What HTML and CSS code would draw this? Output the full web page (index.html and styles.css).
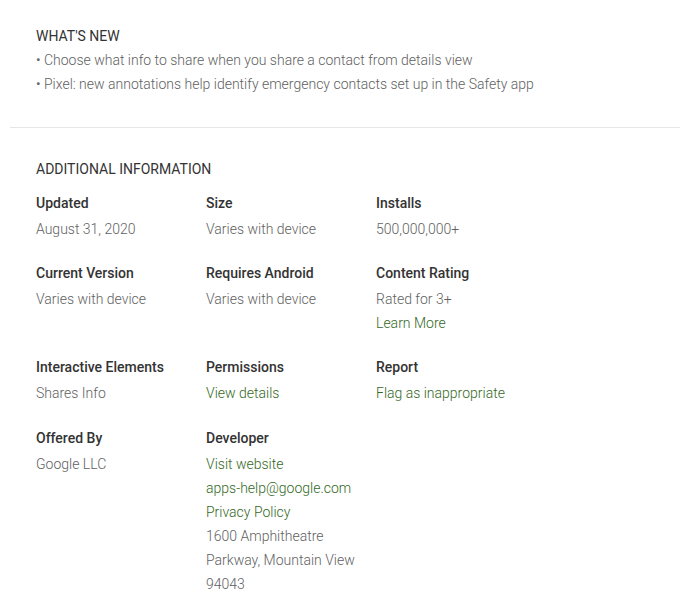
FILE: index.html
```html
<!DOCTYPE html>
<html lang="en">
<head>
  <meta charset="UTF-8" />
  <title>Additional information</title>
  <link rel="stylesheet" href="styles.css">
</head>
<body>
  <div class="page">
    <div class="section whats-new">
      <h2>What's New</h2>
      <div class="notes">
        • Choose what info to share when you share a contact from details view<br>
        • Pixel: new annotations help identify emergency contacts set up in the Safety app
      </div>
    </div>

    <div class="section info">
      <h2>Additional Information</h2>
      <div class="grid">
        <div class="item">
          <div class="label">Updated</div>
          <div class="value">August 31, 2020</div>
        </div>
        <div class="item">
          <div class="label">Size</div>
          <div class="value">Varies with device</div>
        </div>
        <div class="item">
          <div class="label">Installs</div>
          <div class="value">500,000,000+</div>
        </div>

        <div class="item">
          <div class="label">Current Version</div>
          <div class="value">Varies with device</div>
        </div>
        <div class="item">
          <div class="label">Requires Android</div>
          <div class="value">Varies with device</div>
        </div>
        <div class="item">
          <div class="label">Content Rating</div>
          <div class="value">Rated for 3+</div>
          <div class="value"><a href="#">Learn More</a></div>
        </div>

        <div class="item">
          <div class="label">Interactive Elements</div>
          <div class="value">Shares Info</div>
        </div>
        <div class="item">
          <div class="label">Permissions</div>
          <div class="value"><a href="#">View details</a></div>
        </div>
        <div class="item">
          <div class="label">Report</div>
          <div class="value"><a href="#">Flag as inappropriate</a></div>
        </div>

        <div class="item">
          <div class="label">Offered By</div>
          <div class="value">Google LLC</div>
        </div>
        <div class="item">
          <div class="label">Developer</div>
          <div class="value"><a href="#">Visit website</a></div>
          <div class="value"><a href="#">apps-help@google.com</a></div>
          <div class="value"><a href="#">Privacy Policy</a></div>
          <div class="value">1600 Amphitheatre Parkway, Mountain View 94043</div>
        </div>
      </div>
    </div>
  </div>
</body>
</html>
```

FILE: styles.css
```css
body {
  margin: 0;
  background: #fff;
  font-family: Roboto, Arial, sans-serif;
  font-size: 14px;
  line-height: 24px;
  color: #333;
}

.page {
  margin: 0 10px;
}

.section {
  padding: 24px 26px 30px;
}

.whats-new {
  padding-bottom: 31px;
  border-bottom: 1px solid #e6e6e6;
}

h2 {
  margin: 0;
  font-size: 14px;
  font-weight: 400;
  text-transform: uppercase;
  color: #333;
}

.notes {
  font-weight: 300;
  color: #616161;
}

.info {
  padding-top: 29px;
}

.info h2 {
  margin-bottom: 10px;
}

.grid {
  display: grid;
  grid-template-columns: repeat(3, 170px);
  row-gap: 20px;
}

.item {
  padding-right: 12px;
}

.item:nth-child(n+10) {
  margin-top: 1px;
}

.label {
  font-weight: 500;
  color: #333;
  margin-bottom: 2px;
}

.value {
  font-weight: 300;
  color: #616161;
}

.value a {
  color: #33691e;
  text-decoration: none;
}
```
